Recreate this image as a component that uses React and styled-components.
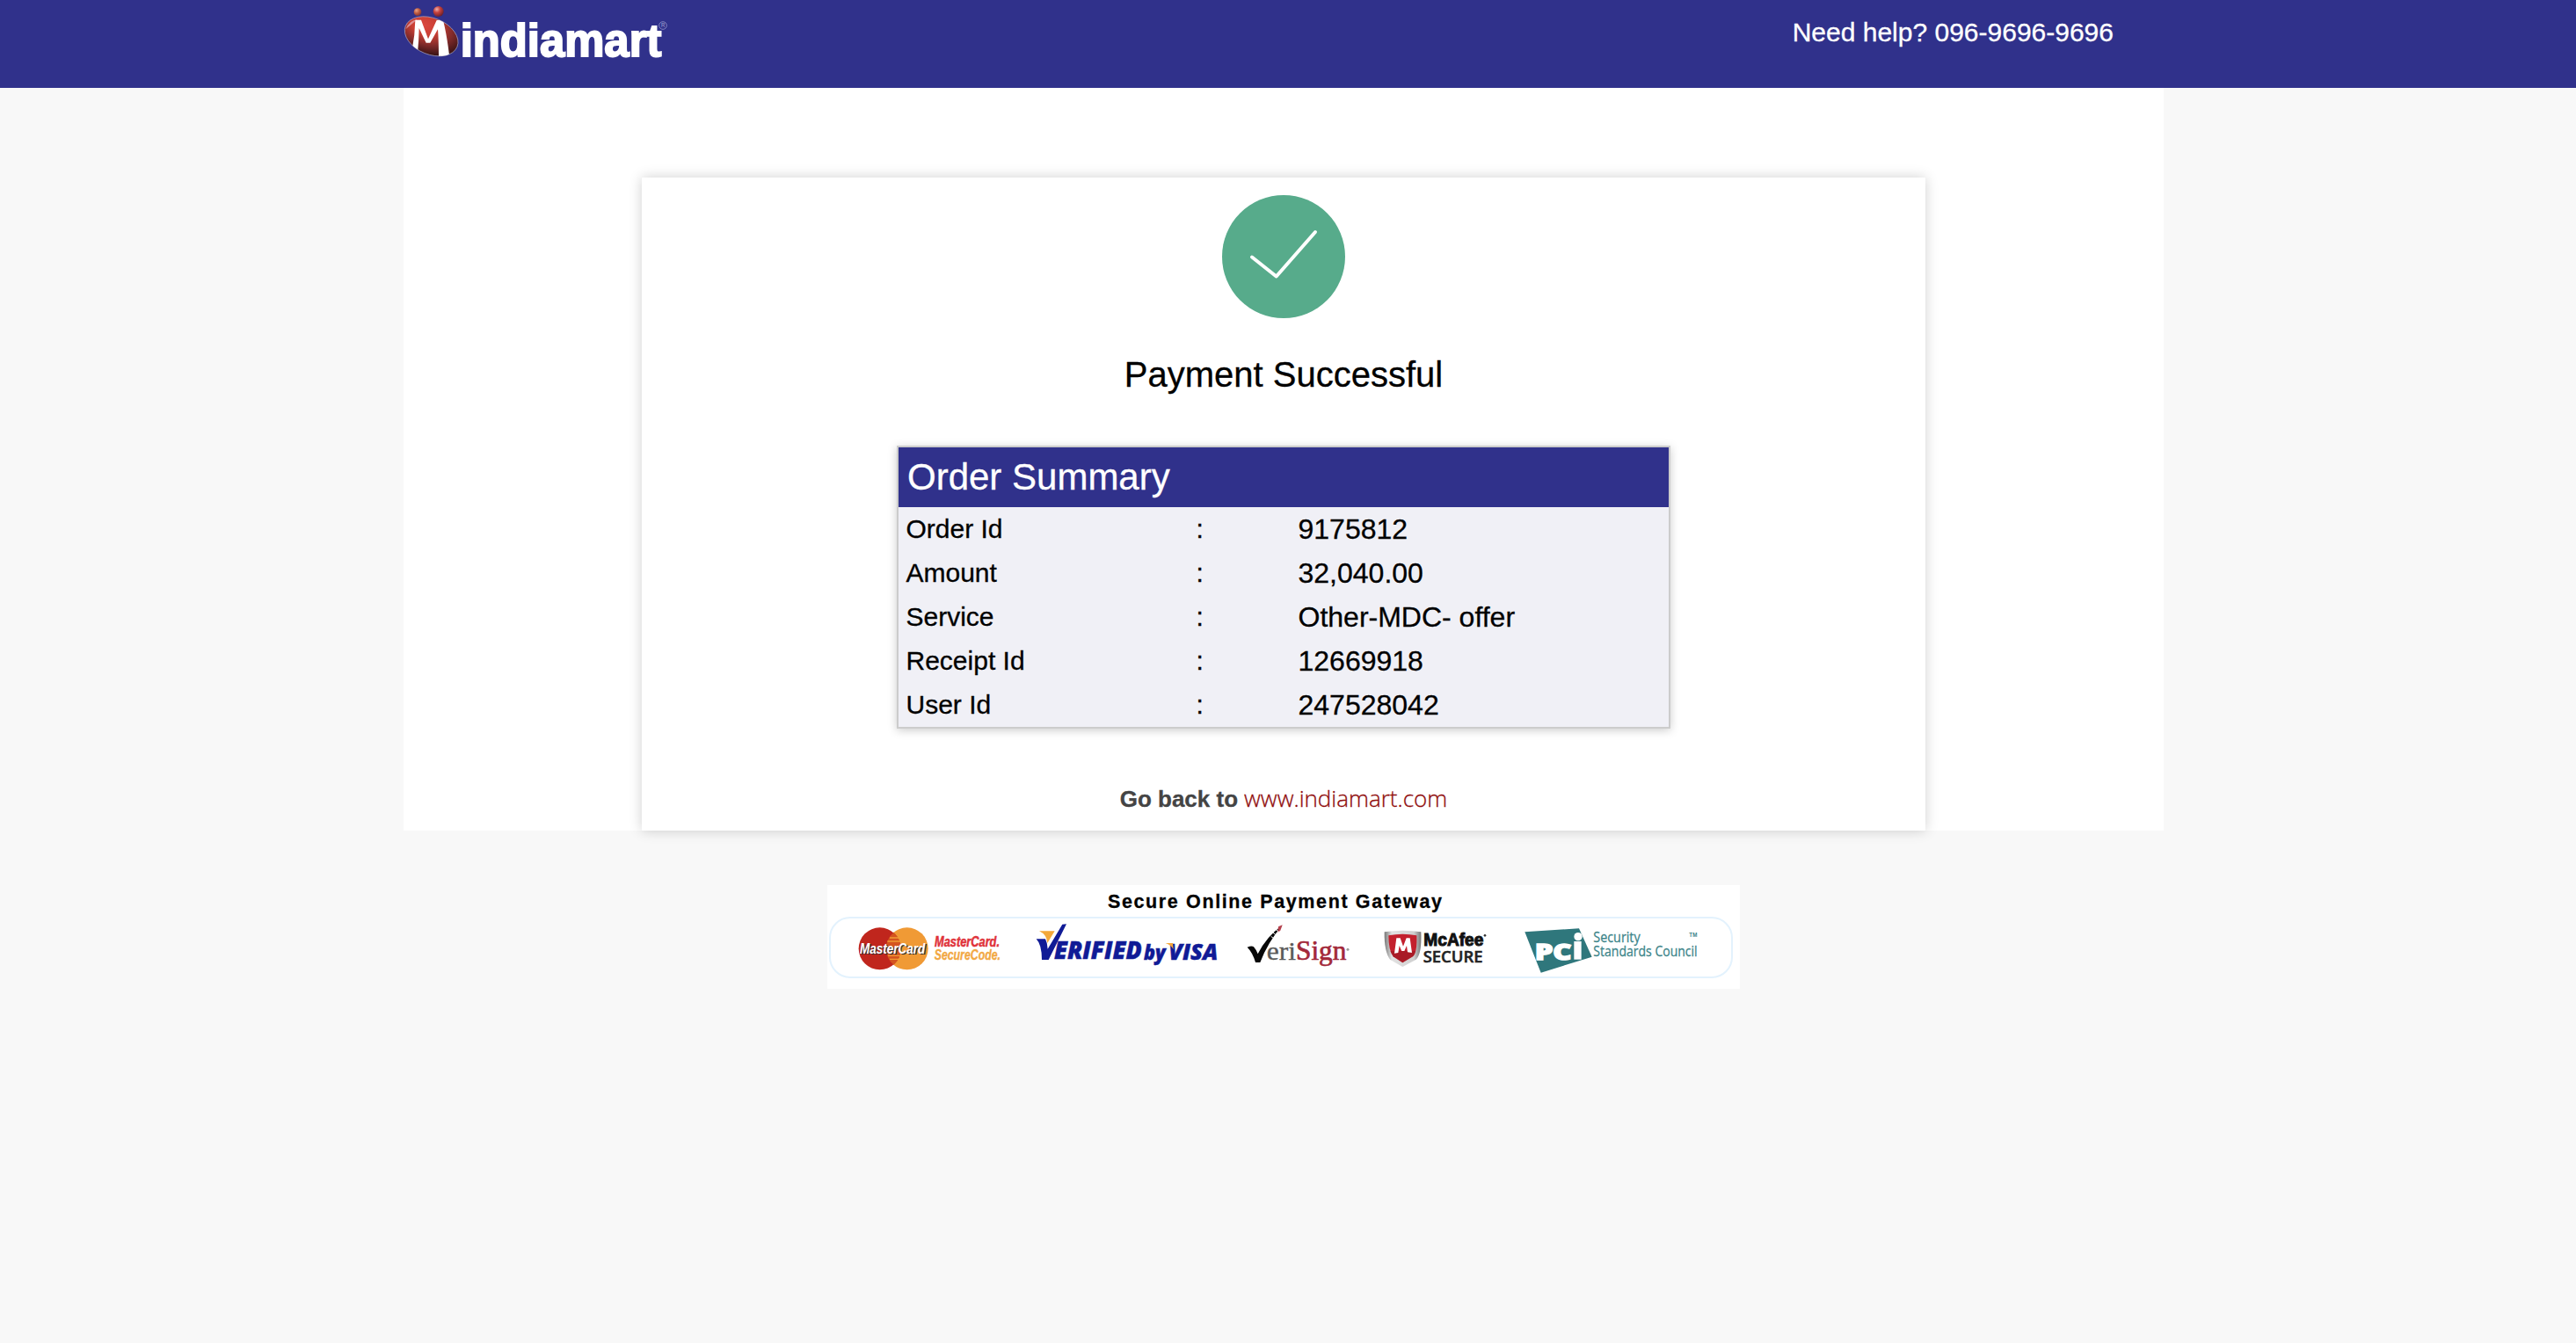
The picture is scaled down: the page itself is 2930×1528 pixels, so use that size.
import React from "react";
import styled, { createGlobalStyle } from "styled-components";

const GlobalStyle = createGlobalStyle`
  * { box-sizing: border-box; }
  body {
    margin: 0;
    min-height: 100vh;
    background: #f8f8f8;
    color: #000;
    font-family: "Liberation Sans", Arial, sans-serif;
    -webkit-text-stroke: 0.3px;
  }
  svg { -webkit-text-stroke: initial; }
  svg text { white-space: pre; }
`;

const Header = styled.header`
  height: 100px;
  padding-right: 10px;
  background: #30318b;
`;

const HeaderInner = styled.div`
  display: flex;
  justify-content: space-between;
  align-items: flex-start;
  width: 2002px;
  margin: 0 auto;
`;

const HelpLine = styled.div`
  padding: 19px 57px 0 0;
  color: #fff;
  font-size: 30px;
  line-height: 36px;
`;

const Main = styled.main`
  display: flex;
  flex-direction: column;
  align-items: center;
  padding-right: 10px;
`;

const Container = styled.section`
  display: flex;
  justify-content: center;
  width: 2002px;
  padding-top: 102px;
  background: #fff;
`;

const Card = styled.div`
  display: flex;
  flex-direction: column;
  align-items: center;
  width: 1460px;
  padding: 20px 0 22px;
  background: #fff;
  box-shadow: 0 0 14px rgba(0, 0, 0, 0.19);
`;

const Title = styled.h1`
  margin: 41px 0 58px;
  font-size: 40px;
  font-weight: 400;
  line-height: 46px;
`;

const Summary = styled.section`
  width: 880px;
  border: 2px solid #ccc;
  background: #f0f0f6;
  box-shadow: 0 2px 10px #ccc;
`;

const SummaryHeading = styled.h2`
  margin: 0;
  padding-left: 10px;
  background: #30318b;
  color: #fff;
  font-size: 42px;
  font-weight: 400;
  line-height: 68px;
`;

const Row = styled.div`
  display: grid;
  grid-template-columns: 330px 116px 1fr;
  height: 50px;
  padding-left: 8.5px;
  font-size: 30px;
  line-height: 50px;
`;

const Value = styled.span`
  font-size: 32px;
`;

const BackLine = styled.p`
  display: flex;
  align-items: baseline;
  gap: 7px;
  height: 30px;
  margin: 64px 0 0;
  color: #444;
  font-size: 26px;
  font-weight: 700;
  line-height: 30px;
`;

const BackLink = styled.a`
  color: #900c0c;
  font-family: "Open Sans", sans-serif;
  font-weight: 300;
  text-decoration: none;
`;

const Gateway = styled.footer`
  width: 1038px;
  height: 118px;
  margin-top: 62px;
  padding: 8px 8px 0 2px;
  background: #fff;
`;

const GatewayTitle = styled.svg`
  display: block;
  height: 28px;
  width: 390px;
  margin-left: 314px;
`;

const Badges = styled.div`
  display: flex;
  width: 1028px;
  height: 70px;
  padding-left: 30px;
  border: 2px solid #e3f2fd;
  border-radius: 24px;
`;

const Drawing = styled.svg`
  display: block;
  flex: none;
  overflow: visible;
  width: ${(p) => p.$w}px;
  height: ${(p) => p.$h || 66}px;
`;

function Label({ x, y, w, size, children, ...rest }) {
  return (
    <text x={x} y={y} fontSize={size} textLength={w} lengthAdjust="spacingAndGlyphs" {...rest}>
      {children}
    </text>
  );
}

function BrandLogo() {
  return (
    <Drawing $w={301} $h={75} viewBox="57 0 903 225">
      <defs>
        <radialGradient id="body" cx="0.32" cy="0.28" r="0.75">
          <stop offset="0" stopColor="#d9473f" />
          <stop offset="0.35" stopColor="#c93f34" />
          <stop offset="0.7" stopColor="#7e2a2a" />
          <stop offset="1" stopColor="#3d1416" />
        </radialGradient>
        <radialGradient id="ballA" cx="0.35" cy="0.3" r="0.8">
          <stop offset="0" stopColor="#e9a184" />
          <stop offset="0.5" stopColor="#b9573c" />
          <stop offset="1" stopColor="#6f2d3a" />
        </radialGradient>
        <radialGradient id="ballB" cx="0.35" cy="0.3" r="0.8">
          <stop offset="0" stopColor="#eeb0ad" />
          <stop offset="0.4" stopColor="#c6423d" />
          <stop offset="1" stopColor="#5c1a25" />
        </radialGradient>
        <clipPath id="bodyClip">
          <ellipse cx="152" cy="124" rx="95" ry="62" transform="rotate(22 152 124)" />
        </clipPath>
      </defs>
      <circle cx="105" cy="41" r="13" fill="url(#ballA)" />
      <circle cx="176" cy="39" r="18" fill="url(#ballB)" />
      <ellipse cx="152" cy="124" rx="95" ry="62" transform="rotate(22 152 124)" fill="url(#body)" stroke="#a9a4c4" strokeWidth="2" />
      <path d="M65 99 Q76 70 104 66 Q86 82 65 99Z" fill="#e8b4bd" opacity="0.7" />
      <g clipPath="url(#bodyClip)" fill="#fff">
        <path d="M97 68 L117 68 L141 133 L170 69 L192 68 Q205 120 214 196 L177 196 Q177 140 174 100 L148 146 L134 146 L110 96 Q109 140 105 182 L86 170 Q96 120 97 68Z" />
      </g>
      <Label x="251" y="192" w="686" size="158" fill="#fff" stroke="#fff" strokeWidth="6" fontWeight="700">indiamart</Label>
      <circle cx="942" cy="87" r="13" fill="none" stroke="#8f90c8" strokeWidth="2.5" />
      <Label x="936" y="94" w="13" size="19" fill="#a9aad6">R</Label>
    </Drawing>
  );
}

function SuccessMark() {
  return (
    <Drawing $w={140} $h={140} viewBox="0 0 140 140">
      <circle cx="70" cy="70" r="70" fill="#57ab8b" />
      <path d="M34 70.5 L61.7 92.5 L106 42" fill="none" stroke="#fff" strokeWidth="4" strokeLinecap="round" strokeLinejoin="round" />
    </Drawing>
  );
}

function MasterCard() {
  return (
    <Drawing $w={165} viewBox="135 135 495 198">
      <circle cx="305" cy="238" r="72" fill="#f09a35" />
      <circle cx="212" cy="238" r="72" fill="#c0261d" />
      <path d="M259 183 A72 72 0 0 1 259 293 A72 72 0 0 1 259 183Z" fill="#d4541f" />
      <path d="M246 201h30M238 213h44M240 262h42M246 274h30" stroke="#f09a35" strokeWidth="4" />
      <Label x="148" y="259" w="223" size="50" fill="#333" fontWeight="700" fontStyle="italic">MasterCard</Label>
      <Label x="144" y="255" w="223" size="50" fill="#fff" fontWeight="700" fontStyle="italic">MasterCard</Label>
      <Label x="399" y="231" w="222" size="50" fill="#e0323a" stroke="#e0323a" strokeWidth="1.5" fontWeight="700" fontStyle="italic">MasterCard.</Label>
      <Label x="398" y="277" w="226" size="50" fill="#f2a844" stroke="#f2a844" fontWeight="700" fontStyle="italic">SecureCode.</Label>
    </Drawing>
  );
}

function VerifiedByVisa() {
  const open = { fontFamily: "Open Sans, sans-serif", fontWeight: 800, fontStyle: "italic", fill: "#101b96", stroke: "#101b96", strokeWidth: 1.5 };
  return (
    <Drawing $w={210} viewBox="54 135 630 198">
      <path d="M66 178 H119 L94 219 Q92 190 66 178Z" fill="#f3a83b" />
      <path d="M56 205 H87 Q94 218 95 239 L145 155 L159 154 L98 276 H75 Q75 224 56 205Z" fill="#101b96" />
      <Label x="117" y="274" w="299" size="82" {...open}>ERIFIED</Label>
      <Label x="423" y="275" w="74" size="70" {...open}>by</Label>
      <Label x="508" y="276" w="168" size="76" {...open}>VISA</Label>
      <path d="M497 219 H522 L524 241 Q516 225 497 219Z" fill="#f3a83b" />
    </Drawing>
  );
}

function VeriSign() {
  const serif = { fontFamily: "Liberation Serif, serif" };
  return (
    <Drawing $w={119} viewBox="774 135 357 198">
      <path d="M776 233 Q792 226 798 232 Q807 242 812 256 Q842 196 895 159 Q845 218 820 285 L804 285 Q795 252 776 233Z" fill="#080808" />
      <path d="M882 163 L896 157 L889 176 L880 182Z" fill="#b5404d" />
      <path d="M862 181 l10 9 M873 171 l9 9 M857 196 l9 7" stroke="#fff" strokeWidth="3" />
      <Label x="842" y="277" w="100" size="88" fill="#5a5a5a" stroke="#5a5a5a" {...serif}>eri</Label>
      <Label x="942" y="277" w="172" size="92" fill="#a3283a" stroke="#a3283a" strokeWidth="2" {...serif}>Sign</Label>
      <circle cx="1119" cy="241" r="4.5" fill="#999" />
    </Drawing>
  );
}

function McAfee() {
  return (
    <Drawing $w={119} viewBox="102 135 357 198">
      <defs>
        <linearGradient id="steel" x1="0" x2="1">
          <stop offset="0" stopColor="#777" />
          <stop offset="0.2" stopColor="#e2e2e2" />
          <stop offset="0.8" stopColor="#d0d0d0" />
          <stop offset="1" stopColor="#777" />
        </linearGradient>
      </defs>
      <path d="M104 181 Q167 172 229 181 Q232 257 212 275 L166 300 L124 276 Q103 250 104 181Z" fill="url(#steel)" />
      <path d="M118 193 Q166 184 214 193 Q216 251 202 264 L166 286 L134 265 Q118 245 118 193Z" fill="#c3202d" />
      <path d="M166 286 L134 265 Q128 257 124 246 L210 246 Q207 260 202 264Z" fill="#8f1620" opacity="0.5" />
      <path d="M138 254 L145 202 H158 L168 230 L179 202 H191 L198 252 L183 250 L180 228 L172 246 H163 L155 228 L151 252Z" fill="#fff" />
      <Label x="238" y="227" w="204" size="58" fill="#111" stroke="#111" strokeWidth="3" fontWeight="700">McAfee</Label>
      <circle cx="447" cy="193" r="4" fill="#333" />
      <Label x="236" y="284" w="204" size="54" fill="#222" stroke="#222" strokeWidth="1.5" fontFamily="Open Sans, sans-serif" fontWeight="600">SECURE</Label>
    </Drawing>
  );
}

function Pci() {
  const thin = { fontFamily: "Open Sans, sans-serif", fill: "#3b8489", stroke: "#3b8489", strokeWidth: 0.8 };
  return (
    <Drawing $w={200} viewBox="582 135 600 198">
      <path d="M583 181 L768 169 L812 266 L638 320Z" fill="#2f777c" />
      <Label x="617" y="276" w="126" size="76" fill="#fff" stroke="#fff" strokeWidth="4" fontFamily="Open Sans, sans-serif" fontWeight="800">PC</Label>
      <path d="M751 213 H776 V275 H751Z" fill="#fff" />
      <circle cx="765" cy="197" r="14" fill="#fff" />
      <Label x="817" y="216" w="160" size="48" {...thin}>Security</Label>
      <Label x="817" y="265" w="355" size="48" {...thin}>Standards Council</Label>
      <Label x="1144" y="198" w="27" size="21" fill="#3b8489" fontWeight="700">TM</Label>
    </Drawing>
  );
}

const ORDER = [
  ["Order Id", "9175812"],
  ["Amount", "32,040.00"],
  ["Service", "Other-MDC- offer"],
  ["Receipt Id", "12669918"],
  ["User Id", "247528042"],
];

const BADGES = [
  [MasterCard, 0],
  [VerifiedByVisa, 38],
  [VeriSign, 30],
  [McAfee, 37],
  [Pci, 41],
];

const BadgeSlot = styled.div`
  flex: none;
  margin-left: ${(p) => p.$gap}px;
`;

export default function App() {
  return (
    <>
      <GlobalStyle />
      <Header>
        <HeaderInner>
          <BrandLogo />
          <HelpLine>Need help? 096-9696-9696</HelpLine>
        </HeaderInner>
      </Header>
      <Main>
        <Container>
          <Card>
            <SuccessMark />
            <Title>Payment Successful</Title>
            <Summary>
              <SummaryHeading>Order Summary</SummaryHeading>
              {ORDER.map(([label, value]) => (
                <Row key={label}>
                  <span>{label}</span>
                  <span>:</span>
                  <Value>{value}</Value>
                </Row>
              ))}
            </Summary>
            <BackLine>
              <span>Go back to</span>
              <BackLink>www.indiamart.com</BackLink>
            </BackLine>
          </Card>
        </Container>
        <Gateway>
          <GatewayTitle viewBox="0 0 390 28">
            <text x="3" y="18" fontSize="21.5" textLength="380" lengthAdjust="spacing" fontFamily="Liberation Sans Narrow, Liberation Sans, Arial, sans-serif" fontWeight="700" stroke="#000" strokeWidth="0.3">Secure Online Payment Gateway</text>
          </GatewayTitle>
          <Badges>
            {BADGES.map(([Badge, gap], i) => (
              <BadgeSlot key={i} $gap={gap}>
                <Badge />
              </BadgeSlot>
            ))}
          </Badges>
        </Gateway>
      </Main>
    </>
  );
}
